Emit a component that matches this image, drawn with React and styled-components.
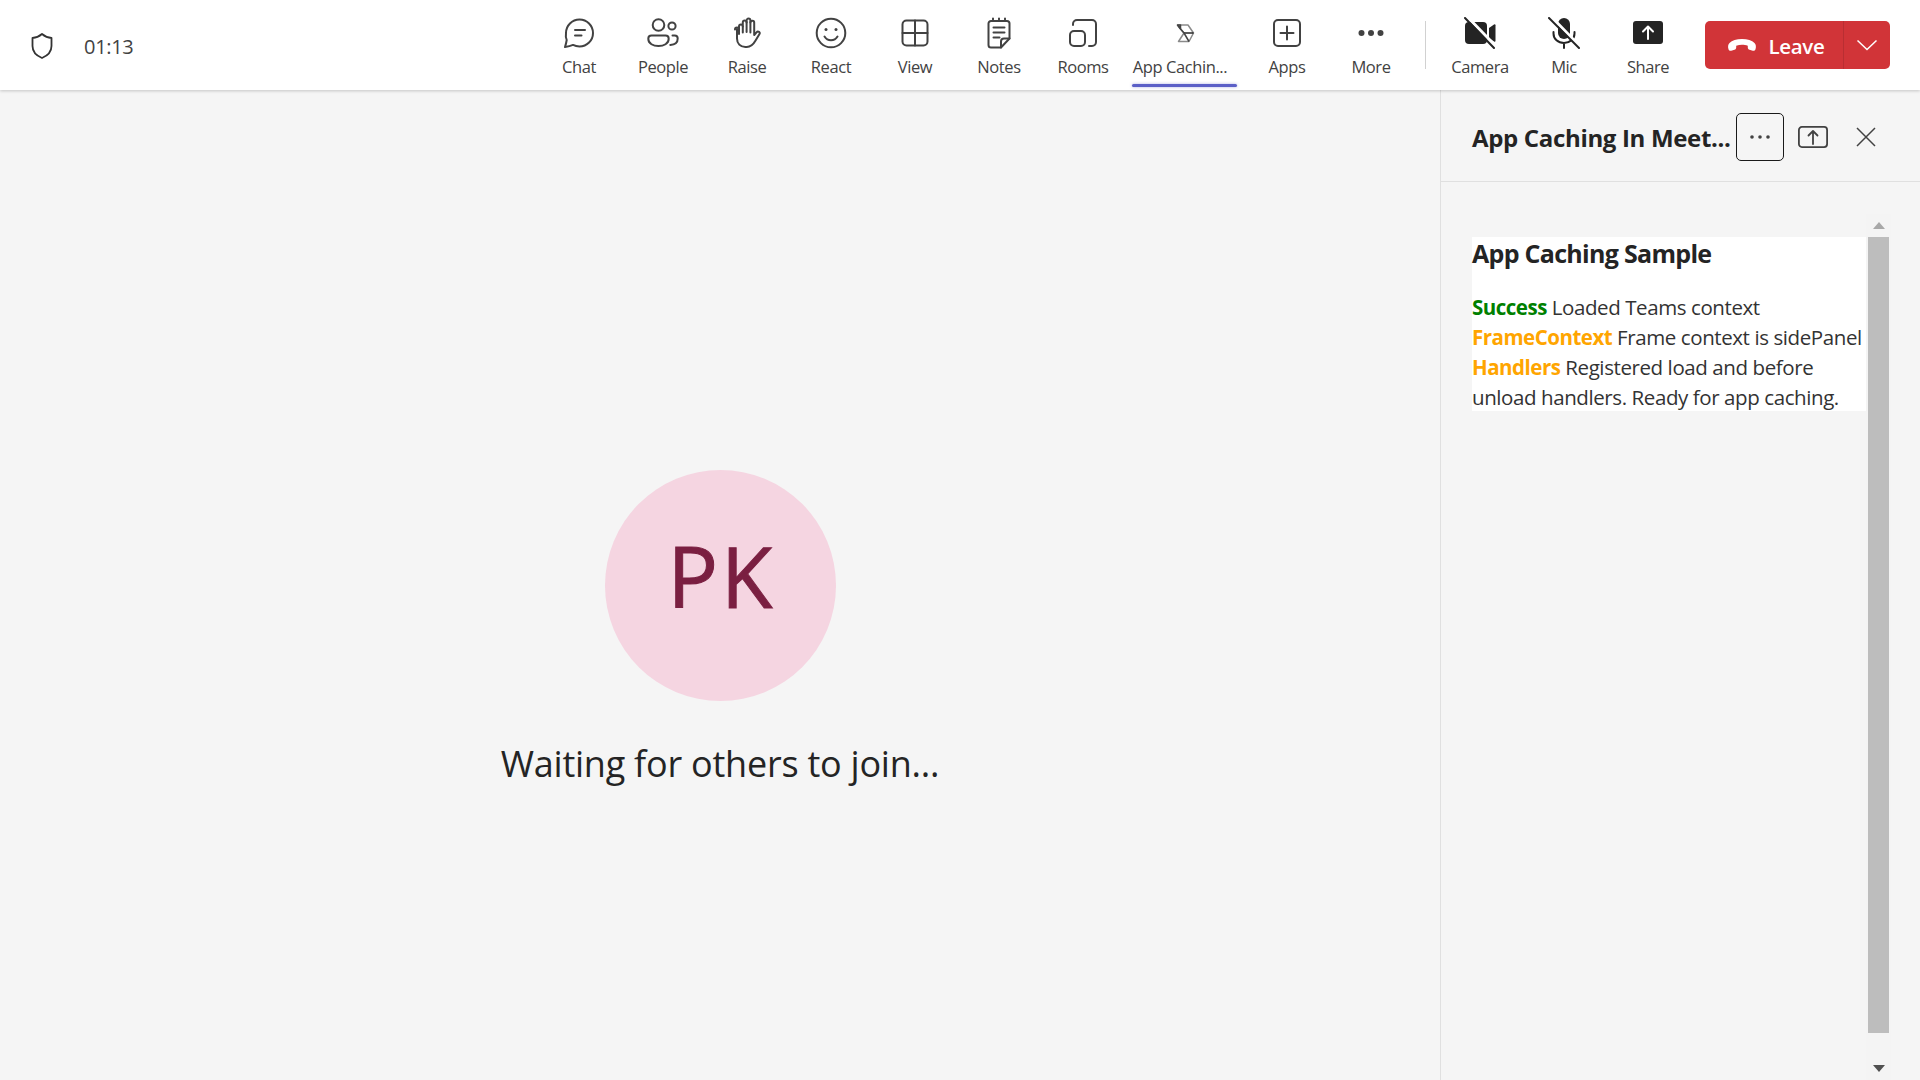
import React from "react";
import styled, { createGlobalStyle } from "styled-components";

const Global = createGlobalStyle`
  html, body { margin: 0; padding: 0; height: 100%; overflow: hidden; background: #f5f5f5; }
  #root { height: 100%; }
  * { box-sizing: border-box; }
`;

const Page = styled.div`
  width: 1920px;
  height: 1080px;
  display: flex;
  flex-direction: column;
  background: #f5f5f5;
  color: #242424;
  font-family: "Open Sans", "Noto Sans", "Liberation Sans", sans-serif;
  overflow: hidden;
`;

const Toolbar = styled.header`
  flex: 0 0 90px;
  height: 90px;
  background: #fff;
  display: flex;
  align-items: stretch;
  justify-content: space-between;
  padding: 0 30px 0 28px;
  box-shadow: 0 1px 3px rgba(0, 0, 0, 0.2);
  position: relative;
  z-index: 2;
`;

const Status = styled.div`
  display: flex;
  align-items: center;
  gap: 28px;
`;

const ShieldSlot = styled.div`
  display: flex;
  color: #333;
`;

const Timer = styled.span`
  font-size: 20px;
  letter-spacing: -0.3px;
  color: #424242;
  padding-top: 3px;
`;

const Actions = styled.nav`
  display: flex;
  align-items: stretch;
`;

const Action = styled.div`
  width: ${(p) => (p.$wide ? 120 : 84)}px;
  height: 90px;
  padding-top: 17px;
  display: flex;
  flex-direction: column;
  align-items: center;
  position: relative;
`;

const IconSlot = styled.div`
  width: 32px;
  height: 32px;
  display: flex;
  align-items: center;
  justify-content: center;
  color: #424242;
`;

const Label = styled.span`
  margin-top: 8px;
  margin-right: ${(p) => (p.$wide ? 10 : 0)}px;
  font-size: 16.5px;
  line-height: 20px;
  letter-spacing: -0.42px;
  color: #424242;
  white-space: nowrap;
`;

const ActiveBar = styled.span`
  position: absolute;
  left: 7px;
  right: 8px;
  bottom: 3px;
  height: 3px;
  border-radius: 2px;
  background: #5b5fc7;
  box-shadow: 0 0 3px rgba(91, 95, 199, 0.5);
`;

const Divider = styled.span`
  width: 1px;
  height: 48px;
  margin: 21px 12px 0;
  background: #d1d1d1;
`;

const LeaveButton = styled.div`
  width: 185px;
  height: 48px;
  margin: 21px 0 0 15px;
  border-radius: 5px;
  background: #d13438;
  color: #fff;
  display: flex;
`;

const LeaveMain = styled.div`
  flex: 1;
  display: flex;
  align-items: center;
  justify-content: center;
  gap: 12px;
  padding: 1px 0 0 3px;
  font-size: 20.5px;
  font-weight: 600;
  letter-spacing: -0.35px;
  border-right: 1px solid #b92e32;
`;

const LeaveMenu = styled.div`
  width: 46px;
  display: flex;
  align-items: center;
  justify-content: center;
`;

const Body = styled.main`
  flex: 1;
  display: flex;
  min-height: 0;
`;

const Stage = styled.section`
  flex: 1;
  display: flex;
  flex-direction: column;
  align-items: center;
  padding-top: 380px;
`;

const Avatar = styled.div`
  width: 231px;
  height: 231px;
  border-radius: 50%;
  background: #f5d5e1;
  color: #7a1f41;
  display: flex;
  align-items: center;
  justify-content: center;
  font-size: 84px;
  letter-spacing: 3px;
  -webkit-text-stroke: 1px #7a1f41;
  padding: 0 0 20px 3px;
`;

const Waiting = styled.h2`
  margin: 39px 0 0;
  font-size: 36px;
  line-height: 48px;
  font-weight: 400;
  letter-spacing: -0.23px;
  color: #242424;
`;

const Panel = styled.aside`
  width: 480px;
  border-left: 1px solid #e0e0e0;
  display: flex;
  flex-direction: column;
`;

const PanelHeader = styled.div`
  height: 92px;
  border-bottom: 1px solid #e0e0e0;
  padding: 3px 0 0 31px;
  display: flex;
  align-items: center;
`;

const PanelTitle = styled.h1`
  margin: 0;
  padding-top: 2px;
  width: 264px;
  font-size: 24px;
  line-height: 32px;
  font-weight: 700;
  letter-spacing: -0.33px;
  white-space: nowrap;
  color: #242424;
`;

const MoreButton = styled.div`
  width: 48px;
  height: 48px;
  border: 1px solid #1a1a1a;
  border-radius: 5px;
  display: flex;
  align-items: center;
  justify-content: center;
  color: #424242;
`;

const HeaderIcon = styled.div`
  display: flex;
  align-items: center;
  justify-content: center;
  margin-left: ${(p) => p.$gap}px;
  color: #424242;
`;

const PanelBody = styled.div`
  flex: 1;
  display: flex;
  padding: 32px 29px 0 31px;
  min-height: 0;
`;

const Content = styled.article`
  flex: 1;
  margin-top: 23px;
  height: 174px;
  background: #fff;
`;

const ContentTitle = styled.h3`
  margin: 0 0 23px;
  font-size: 25px;
  line-height: 32px;
  font-weight: 700;
  letter-spacing: -0.7px;
  color: #242424;
`;

const StatusLine = styled.div`
  font-size: 20.5px;
  line-height: 30px;
  letter-spacing: -0.41px;
  color: #333;
`;

const Tag = styled.strong`
  font-weight: 700;
  letter-spacing: -0.5px;
  color: ${(p) => p.$color};
`;

const Scrollbar = styled.div`
  width: 25px;
  display: flex;
  flex-direction: column;
  align-items: center;
  background: #f4f4f4;
`;

const ArrowSlot = styled.div`
  height: ${(p) => p.$h}px;
  flex: 0 0 ${(p) => p.$h}px;
  display: flex;
  align-items: ${(p) => p.$align};
  justify-content: center;
`;

const Thumb = styled.div`
  width: 21px;
  height: 796px;
  background: #bdbdbd;
`;

const Stroke = ({ children, size = 32, w = 2, box }) => (
  <svg width={size} height={size} viewBox={box || `0 0 ${size} ${size}`} fill="none" stroke="currentColor" strokeWidth={w} strokeLinecap="round" strokeLinejoin="round">
    {children}
  </svg>
);

const Icons = {
  Chat: () => (
    <Stroke>
      <path d="M16.5 2.5c7.5 0 13.500 6 13.500 13.500s-6 13.500-13.500 13.500c-2.400 0-4.600-.6-6.500-1.600-2 .8-5 1.600-8 2.100.8-2.500 1.400-4.900 1.700-7A13.400 13.400 0 0 1 3 16C3 8.500 9 2.500 16.500 2.500z" />
      <path d="M12 13h10M12 18.500h6.500" />
    </Stroke>
  ),
  People: () => (
    <Stroke>
      <circle cx="11.500" cy="8" r="5.800" />
      <circle cx="25" cy="9" r="3.600" />
      <path d="M4.500 18.500h14c1.800 0 3.200 1.400 3.200 3.200 0 5-5 7.300-10.200 7.300S1.300 26.700 1.300 21.700c0-1.800 1.400-3.200 3.200-3.200z" />
      <path d="M25.500 18.500h2.200c1.700 0 3 1.300 3 3 0 3.800-3 6.200-7.400 6.500" />
    </Stroke>
  ),
  Raise: () => (
    <Stroke>
      <path d="M8 17V9.500a1.900 1.900 0 0 1 3.800 0V5.500a1.900 1.900 0 0 1 3.800 0V3.500a1.900 1.900 0 0 1 3.800 0v2a1.900 1.900 0 0 1 3.800.2V18l2.300-2.700c1.500-1.800 4.200-.2 3 1.800l-4.100 6.700c-2.100 3.700-4 6.200-8.600 6.200h-1.500c-5 0-8.300-3.500-8.300-8.500V12" />
      <path d="M4 12.500a2 2 0 0 1 4-.1M11.800 9.500V15.500M15.600 5v10M19.400 5v10.500" />
    </Stroke>
  ),
  React: () => (
    <Stroke>
      <circle cx="16" cy="16" r="14.300" />
      <circle cx="11" cy="12.500" r="1.500" fill="currentColor" stroke="none" />
      <circle cx="21" cy="12.500" r="1.500" fill="currentColor" stroke="none" />
      <path d="M9.500 19.500c1.400 2.300 3.700 3.700 6.500 3.700s5.100-1.400 6.500-3.700" />
    </Stroke>
  ),
  View: () => (
    <Stroke>
      <rect x="3.500" y="3.500" width="25" height="25" rx="4" />
      <path d="M16 3.500v25M3.500 16h25" />
    </Stroke>
  ),
  Notes: () => (
    <Stroke>
      <path d="M8 4h16a2.500 2.500 0 0 1 2.500 2.500v15L18 30.500H8A2.500 2.500 0 0 1 5.500 28V6.500A2.500 2.500 0 0 1 8 4z" />
      <path d="M26.500 21.500H21a3 3 0 0 0-3 3v6" />
      <path d="M10 1.500v1M16 1.500v1M22 1.500v1M10.500 10.500h11M10.500 15.500h11M10.500 20.500h6" />
    </Stroke>
  ),
  Rooms: () => (
    <Stroke>
      <path d="M6 8V7a4 4 0 0 1 4-4h15a4 4 0 0 1 4 4v18a4 4 0 0 1-4 4h-3" />
      <rect x="3" y="14" width="15" height="15" rx="4" />
    </Stroke>
  ),
  AppCache: () => (
    <svg width="32" height="32" viewBox="0 0 32 32" fill="none" stroke="#8a8a8a" strokeWidth="1.500" strokeLinejoin="round">
      <path d="M8.500 8h10.500l5.500 8-4.500 8.500H9.500l5.500-8.500z" />
      <path d="M15 16h9.500" stroke="#242424" />
      <path d="M8.500 8l2.500 3.500 4 4.500 5 8.500M8.500 8h3v3.500z" stroke="#444" />
    </svg>
  ),
  Apps: () => (
    <Stroke>
      <rect x="3" y="3" width="26" height="26" rx="4" />
      <path d="M16 9.500v13M9.500 16h13" />
    </Stroke>
  ),
  More: () => (
    <svg width="32" height="32" viewBox="0 0 32 32" fill="currentColor">
      <circle cx="6.500" cy="16" r="3" />
      <circle cx="16" cy="16" r="3" />
      <circle cx="25.500" cy="16" r="3" />
    </svg>
  ),
  Camera: () => (
    <svg width="32" height="32" viewBox="0 0 32 32" fill="#242424">
      <path d="M5 5h14a4 4 0 0 1 4 4v14a4 4 0 0 1-4 4H5a4 4 0 0 1-4-4V9a4 4 0 0 1 4-4z" />
      <path d="M25 11l5-3.500a1 1 0 0 1 1.500.8v15.400a1 1 0 0 1-1.500.8L25 21z" />
      <path d="M3.500 0l28 29" stroke="#fff" strokeWidth="3" />
      <path d="M1 1l29 30" stroke="#242424" strokeWidth="2" strokeLinecap="round" />
    </svg>
  ),
  Mic: () => (
    <svg width="32" height="32" viewBox="0 0 32 32" fill="none" stroke="#242424" strokeWidth="2" strokeLinecap="round">
      <rect x="10" y="1" width="12" height="21" rx="6" fill="#242424" stroke="none" />
      <path d="M5.500 15v1.500c0 5.500 4.500 9.500 10.500 9.500s10.500-4 10.500-9.500V15M16 26v5" />
      <path d="M3.500 0l28 29" stroke="#fff" strokeWidth="3" />
      <path d="M1 1l30 30" />
    </svg>
  ),
  Share: () => (
    <svg width="32" height="32" viewBox="0 0 32 32">
      <rect x="1" y="4" width="30" height="23" rx="3" fill="#242424" />
      <path d="M16 22V10M11 14.500L16 9.500l5 5" fill="none" stroke="#fff" strokeWidth="2" strokeLinecap="round" strokeLinejoin="round" />
    </svg>
  ),
};

const Shield = () => (
  <svg width="28" height="32" viewBox="0 0 28 32" fill="none" stroke="currentColor" strokeWidth="1.800" strokeLinejoin="round">
    <path d="M14 5c3 2.600 6.500 3.800 9.500 4v8c0 6-3.500 9.500-9.500 12C8 26.500 4.500 23 4.500 17V9c3-.2 6.500-1.400 9.500-4z" />
  </svg>
);

const Phone = () => (
  <svg width="30" height="16" viewBox="0 0 30 16" fill="#fff">
    <path d="M15 1c5.500 0 10 1.500 12.500 4 1.500 1.500 1.800 4 1 6.200-.4 1.200-1.600 1.800-2.700 1.500l-3.300-.9c-1-.3-1.700-1.100-1.700-2.200V7.800c-1.800-.8-3.800-1.100-5.800-1.100s-4 .3-5.800 1.100v1.800c0 1.100-.7 1.900-1.700 2.200l-3.300.9c-1.100.3-2.300-.3-2.700-1.500-.8-2.200-.5-4.700 1-6.200C5 2.500 9.500 1 15 1z" />
  </svg>
);

const actionsA = [
  ["Chat", Icons.Chat], ["People", Icons.People], ["Raise", Icons.Raise], ["React", Icons.React],
  ["View", Icons.View], ["Notes", Icons.Notes], ["Rooms", Icons.Rooms],
];
const actionsB = [["Apps", Icons.Apps], ["More", Icons.More]];
const actionsC = [["Camera", Icons.Camera], ["Mic", Icons.Mic], ["Share", Icons.Share]];

const ActionItem = ({ label, Icon, wide, active }) => (
  <Action $wide={wide}>
    <IconSlot><Icon /></IconSlot>
    <Label $wide={wide}>{label}</Label>
    {active && <ActiveBar />}
  </Action>
);

export default function App() {
  return (
    <Page>
      <Global />
      <Toolbar>
        <Status>
          <ShieldSlot><Shield /></ShieldSlot>
          <Timer>01:13</Timer>
        </Status>
        <Actions>
          {actionsA.map(([l, I]) => <ActionItem key={l} label={l} Icon={I} />)}
          <ActionItem label="App Cachin..." Icon={Icons.AppCache} wide active />
          {actionsB.map(([l, I]) => <ActionItem key={l} label={l} Icon={I} />)}
          <Divider />
          {actionsC.map(([l, I]) => <ActionItem key={l} label={l} Icon={I} />)}
          <LeaveButton>
            <LeaveMain><Phone />Leave</LeaveMain>
            <LeaveMenu>
              <svg width="22" height="12" viewBox="0 0 22 12" fill="none" stroke="#fff" strokeWidth="1.500"><path d="M1.500 1.500L11 10.500l9.500-9" /></svg>
            </LeaveMenu>
          </LeaveButton>
        </Actions>
      </Toolbar>
      <Body>
        <Stage>
          <Avatar>PK</Avatar>
          <Waiting>Waiting for others to join...</Waiting>
        </Stage>
        <Panel>
          <PanelHeader>
            <PanelTitle>App Caching In Meet...</PanelTitle>
            <MoreButton>
              <svg width="20" height="4" viewBox="0 0 20 4" fill="currentColor"><circle cx="2" cy="2" r="1.800" /><circle cx="10" cy="2" r="1.800" /><circle cx="18" cy="2" r="1.800" /></svg>
            </MoreButton>
            <HeaderIcon $gap={14}>
              <svg width="30" height="22" viewBox="0 0 30 22" fill="none" stroke="currentColor" strokeWidth="1.800" strokeLinecap="round" strokeLinejoin="round"><rect x="0.900" y="0.900" width="28.200" height="20.200" rx="3" /><path d="M15 18V5M10.500 9.500L15 5l4.500 4.500" /></svg>
            </HeaderIcon>
            <HeaderIcon $gap={28}>
              <svg width="20" height="20" viewBox="0 0 20 20" fill="none" stroke="currentColor" strokeWidth="1.500"><path d="M1 1l18 18M19 1L1 19" /></svg>
            </HeaderIcon>
          </PanelHeader>
          <PanelBody>
            <Content>
              <ContentTitle>App Caching Sample</ContentTitle>
              <StatusLine><Tag $color="#008000">Success</Tag> Loaded Teams context</StatusLine>
              <StatusLine><Tag $color="#ffa500">FrameContext</Tag> Frame context is sidePanel</StatusLine>
              <StatusLine><Tag $color="#ffa500">Handlers</Tag> Registered load and before unload handlers. Ready for app caching.</StatusLine>
            </Content>
            <Scrollbar>
              <ArrowSlot $h={23} $align="center">
                <svg width="12" height="7" viewBox="0 0 12 7"><path d="M6 0l6 7H0z" fill="#a8a8a8" /></svg>
              </ArrowSlot>
              <Thumb />
              <ArrowSlot $h={47} $align="flex-end">
                <svg width="12" height="15" viewBox="0 0 12 15"><path d="M0 0h12L6 7z" fill="#505050" /></svg>
              </ArrowSlot>
            </Scrollbar>
          </PanelBody>
        </Panel>
      </Body>
    </Page>
  );
}
